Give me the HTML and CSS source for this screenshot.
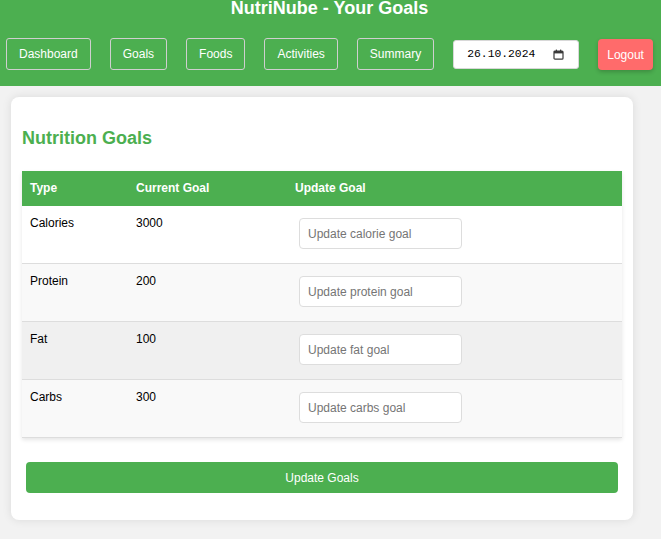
FILE: index.html
```html
<!DOCTYPE html>
<html lang="en">
<head>
<meta charset="utf-8">
<title>NutriNube - Your Goals</title>
<link rel="stylesheet" href="styles.css">
</head>
<body>
<header class="topbar">
  <h1 class="title">NutriNube - Your Goals</h1>
  <nav class="nav">
    <button class="nav-btn">Dashboard</button>
    <button class="nav-btn">Goals</button>
    <button class="nav-btn">Foods</button>
    <button class="nav-btn">Activities</button>
    <button class="nav-btn">Summary</button>
    <div class="date-field">
      <span class="date-text">26.10.2024</span>
      <svg class="cal-icon" width="11" height="11" viewBox="0 0 11 11" aria-hidden="true">
        <rect x="1" y="2" width="9" height="8.2" rx="1" fill="none" stroke="#3a3a3a" stroke-width="1.2"/>
        <rect x="1" y="2" width="9" height="2.4" fill="#3a3a3a"/>
        <rect x="2.8" y="0.6" width="1.2" height="2" fill="#3a3a3a"/>
        <rect x="7" y="0.6" width="1.2" height="2" fill="#3a3a3a"/>
      </svg>
    </div>
    <button class="logout-btn">Logout</button>
  </nav>
</header>

<main class="card">
  <h2 class="card-title">Nutrition Goals</h2>
  <table class="goals-table">
    <thead>
      <tr>
        <th class="col-type">Type</th>
        <th class="col-current">Current Goal</th>
        <th class="col-update">Update Goal</th>
      </tr>
    </thead>
    <tbody>
      <tr class="row-white">
        <td>Calories</td>
        <td>3000</td>
        <td><input class="goal-input" type="text" placeholder="Update calorie goal"></td>
      </tr>
      <tr class="row-light">
        <td>Protein</td>
        <td>200</td>
        <td><input class="goal-input" type="text" placeholder="Update protein goal"></td>
      </tr>
      <tr class="row-hover">
        <td>Fat</td>
        <td>100</td>
        <td><input class="goal-input" type="text" placeholder="Update fat goal"></td>
      </tr>
      <tr class="row-light">
        <td>Carbs</td>
        <td>300</td>
        <td><input class="goal-input" type="text" placeholder="Update carbs goal"></td>
      </tr>
    </tbody>
  </table>
  <button class="submit-btn">Update Goals</button>
</main>
</body>
</html>
```

FILE: styles.css
```css
* { box-sizing: border-box; }

body {
  margin: 0;
  background: #f2f2f2;
  font-family: "Liberation Sans", Arial, sans-serif;
  font-size: 12px;
  color: #000;
}

.topbar {
  background: #4caf50;
  padding: 0 8px 16px 6px;
}

.title {
  margin: 0 0 21px;
  font-size: 18px;
  line-height: 17px;
  font-weight: bold;
  color: #fff;
  text-align: center;
}

.nav {
  display: flex;
  justify-content: space-between;
  align-items: center;
}

.nav-btn {
  font-family: "Liberation Sans", Arial, sans-serif;
  font-size: 12px;
  line-height: 14px;
  color: #fff;
  background: transparent;
  border: 1px solid #cfcfcf;
  border-radius: 3px;
  padding: 8px 12px;
  margin: 0;
}

.date-field {
  display: flex;
  align-items: center;
  justify-content: space-between;
  width: 126px;
  height: 29px;
  padding: 0 14px 0 13px;
  background: #fff;
  border: 1px solid #d8d8d8;
  border-radius: 3px;
}

.date-text {
  font-family: "Liberation Mono", "DejaVu Sans Mono", monospace;
  font-size: 11.35px;
  color: #000;
}

.cal-icon { display: block; }

.logout-btn {
  font-family: "Liberation Sans", Arial, sans-serif;
  font-size: 12px;
  line-height: 14px;
  color: #fff;
  background: #ff6b6b;
  border: none;
  border-radius: 4px;
  padding: 9px 9px 8px;
  margin: 0;
  box-shadow: 0 2px 4px rgba(0, 0, 0, 0.2);
}

.card {
  display: block;
  width: 622px;
  margin: 11px;
  padding: 11px;
  background: #fff;
  border-radius: 8px;
  box-shadow: 0 0 10px rgba(0, 0, 0, 0.1);
}

.card-title {
  margin: 20px 0 22px;
  font-size: 18px;
  line-height: 21px;
  font-weight: bold;
  color: #4caf50;
}

.goals-table {
  width: 600px;
  border-collapse: collapse;
  box-shadow: 0 2px 4px rgba(0, 0, 0, 0.1);
}

.goals-table th {
  background: #4caf50;
  color: #fff;
  font-weight: bold;
  text-align: left;
  padding: 10px 8px;
  line-height: 15px;
}

.col-type { width: 106px; }
.col-current { width: 159px; }
.col-update { width: 335px; }

.goals-table td {
  padding: 10px 8px;
  vertical-align: top;
  border-bottom: 1px solid #ddd;
  color: #000;
}

.row-white { background: #fff; }
.row-light { background: #f9f9f9; }
.row-hover { background: #f0f0f0; }

.goal-input {
  display: block;
  width: 163px;
  height: 31px;
  margin: 2px 0 4px 4px;
  padding: 0 8px;
  font-family: "Liberation Sans", Arial, sans-serif;
  font-size: 12px;
  color: #000;
  background: #fff;
  border: 1px solid #ddd;
  border-radius: 4px;
}

.goal-input::placeholder { color: #757575; }

.submit-btn {
  display: block;
  width: calc(100% - 8px);
  height: 31px;
  margin: 24px 4px 16px;
  font-family: "Liberation Sans", Arial, sans-serif;
  font-size: 12px;
  color: #fff;
  background: #4caf50;
  border: none;
  border-radius: 4px;
}
```
